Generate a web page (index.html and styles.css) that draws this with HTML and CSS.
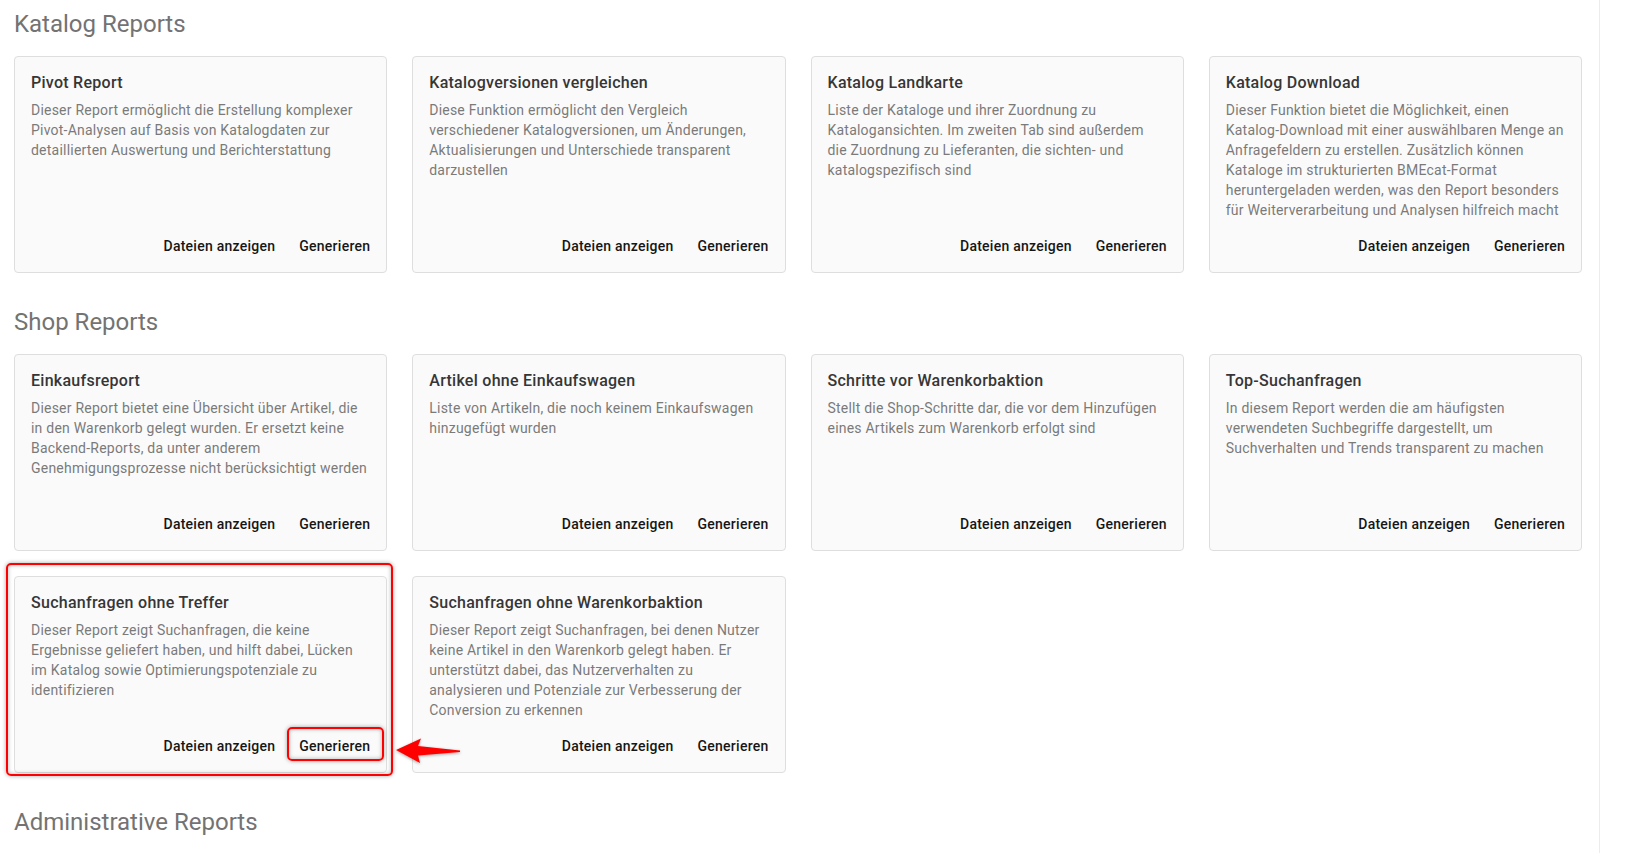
FILE: index.html
```html
<!DOCTYPE html>
<html lang="de">

<head>
    <meta charset="UTF-8">
    <meta name="viewport" content="width=device-width, initial-scale=1.0">
    <title>Reports</title>
    <link rel="stylesheet" href="styles.css">
</head>

<body>
    <div class="page">
        <section class="group">
            <h2>Katalog Reports</h2>
            <div class="cards">
                <div class="card">
                    <div class="content">
                        <h3>Pivot Report</h3>
                        <p>Dieser Report ermöglicht die Erstellung komplexer Pivot-Analysen auf Basis von Katalogdaten zur detaillierten Auswertung und Berichterstattung</p>
                    </div>
                    <div class="actions">
                        <button class="btn">Dateien anzeigen</button>
                        <button class="btn">Generieren</button>
                    </div>
                </div>
                <div class="card">
                    <div class="content">
                        <h3>Katalogversionen vergleichen</h3>
                        <p>Diese Funktion ermöglicht den Vergleich verschiedener Katalogversionen, um Änderungen, Aktualisierungen und Unterschiede transparent darzustellen</p>
                    </div>
                    <div class="actions">
                        <button class="btn">Dateien anzeigen</button>
                        <button class="btn">Generieren</button>
                    </div>
                </div>
                <div class="card">
                    <div class="content">
                        <h3>Katalog Landkarte</h3>
                        <p>Liste der Kataloge und ihrer Zuordnung zu Katalogansichten. Im zweiten Tab sind außerdem die Zuordnung zu Lieferanten, die sichten- und katalogspezifisch sind</p>
                    </div>
                    <div class="actions">
                        <button class="btn">Dateien anzeigen</button>
                        <button class="btn">Generieren</button>
                    </div>
                </div>
                <div class="card">
                    <div class="content">
                        <h3>Katalog Download</h3>
                        <p>Dieser Funktion bietet die Möglichkeit, einen Katalog-Download mit einer auswählbaren Menge an Anfragefeldern zu erstellen. Zusätzlich können Kataloge im strukturierten BMEcat-Format heruntergeladen werden, was den Report besonders für Weiterverarbeitung und Analysen hilfreich macht</p>
                    </div>
                    <div class="actions">
                        <button class="btn">Dateien anzeigen</button>
                        <button class="btn">Generieren</button>
                    </div>
                </div>
            </div>
        </section>

        <section class="group">
            <h2>Shop Reports</h2>
            <div class="cards">
                <div class="card">
                    <div class="content">
                        <h3>Einkaufsreport</h3>
                        <p>Dieser Report bietet eine Übersicht über Artikel, die in den Warenkorb gelegt wurden. Er ersetzt keine Backend-Reports, da unter anderem Genehmigungsprozesse nicht berücksichtigt werden</p>
                    </div>
                    <div class="actions">
                        <button class="btn">Dateien anzeigen</button>
                        <button class="btn">Generieren</button>
                    </div>
                </div>
                <div class="card">
                    <div class="content">
                        <h3>Artikel ohne Einkaufswagen</h3>
                        <p>Liste von Artikeln, die noch keinem Einkaufswagen hinzugefügt wurden</p>
                    </div>
                    <div class="actions">
                        <button class="btn">Dateien anzeigen</button>
                        <button class="btn">Generieren</button>
                    </div>
                </div>
                <div class="card">
                    <div class="content">
                        <h3>Schritte vor Warenkorbaktion</h3>
                        <p>Stellt die Shop-Schritte dar, die vor dem Hinzufügen eines Artikels zum Warenkorb erfolgt sind</p>
                    </div>
                    <div class="actions">
                        <button class="btn">Dateien anzeigen</button>
                        <button class="btn">Generieren</button>
                    </div>
                </div>
                <div class="card">
                    <div class="content">
                        <h3>Top-Suchanfragen</h3>
                        <p>In diesem Report werden die am häufigsten verwendeten Suchbegriffe dargestellt, um Suchverhalten und Trends transparent zu machen</p>
                    </div>
                    <div class="actions">
                        <button class="btn">Dateien anzeigen</button>
                        <button class="btn">Generieren</button>
                    </div>
                </div>
                <div class="card marked">
                    <div class="content">
                        <h3>Suchanfragen ohne Treffer</h3>
                        <p>Dieser Report zeigt Suchanfragen, die keine Ergebnisse geliefert haben, und hilft dabei, Lücken im Katalog sowie Optimierungspotenziale zu identifizieren</p>
                    </div>
                    <div class="actions">
                        <button class="btn">Dateien anzeigen</button>
                        <button class="btn">Generieren<span class="mark-btn"></span></button>
                    </div>
                    <span class="mark-card"></span>
                    <svg class="arrow" width="68" height="30" viewBox="0 0 68 30">
                        <polygon points="1,14 26,2.5 23,10 65,14.6 65,16 23,19.5 25,27" fill="#f00"/>
                    </svg>
                </div>
                <div class="card">
                    <div class="content">
                        <h3>Suchanfragen ohne Warenkorbaktion</h3>
                        <p>Dieser Report zeigt Suchanfragen, bei denen Nutzer keine Artikel in den Warenkorb gelegt haben. Er unterstützt dabei, das Nutzerverhalten zu analysieren und Potenziale zur Verbesserung der Conversion zu erkennen</p>
                    </div>
                    <div class="actions">
                        <button class="btn">Dateien anzeigen</button>
                        <button class="btn">Generieren</button>
                    </div>
                </div>
            </div>
        </section>

        <section class="group">
            <h2>Administrative Reports</h2>
        </section>
    </div>
</body>

</html>
```

FILE: styles.css
```css
body {
    margin: 0;
    background: #fff;
    font-family: Roboto, "Liberation Sans", sans-serif;
}

.page {
    width: 1600px;
    min-height: 853px;
    box-sizing: border-box;
    padding: 8px 17px 0 14px;
    border-right: 1px solid #ececec;
}

/*--------------------------*/
.group {
    margin-bottom: 33px;
}

.group h2 {
    margin: 0 0 16px;
    font-size: 24px;
    line-height: 32px;
    font-weight: 400;
    color: #737373;
}

.cards {
    display: grid;
    grid-template-columns: repeat(4, 1fr);
    gap: 25px;
}

.card {
    position: relative;
    display: flex;
    flex-direction: column;
    background: #fafafa;
    border: 1px solid #dedede;
    border-radius: 4px;
}

.card .content {
    padding: 16px 16px 0;
}

.card h3 {
    margin: 0 0 7px;
    font-size: 16px;
    line-height: 20px;
    font-weight: 500;
    letter-spacing: .27px;
    color: #363636;
}

.card p {
    margin: 0;
    min-height: 100px;
    font-size: 14px;
    line-height: 20px;
    letter-spacing: .22px;
    color: #7a7a7a;
}

.card .actions {
    margin-top: auto;
    display: flex;
    justify-content: flex-end;
    gap: 8px;
    padding: 8px;
}

.btn {
    position: relative;
    height: 36px;
    padding: 0 8px;
    border: 0;
    background: none;
    font-family: inherit;
    font-size: 14px;
    font-weight: 500;
    line-height: 36px;
    letter-spacing: .25px;
    color: #161616;
    cursor: pointer;
}

/* red callouts */
.marked {
    z-index: 2;
}

.mark-card,
.mark-btn {
    position: absolute;
    border: 2px solid #f00;
    border-radius: 5px;
    box-shadow: 0 0 4px rgba(0, 0, 0, .35), inset 0 0 4px rgba(0, 0, 0, .3);
    pointer-events: none;
}

.mark-card {
    top: -14px;
    left: -9px;
    right: -7px;
    bottom: -4px;
}

.mark-btn {
    top: -1px;
    left: -4px;
    right: -6px;
    bottom: 3px;
}

.arrow {
    position: absolute;
    left: 380px;
    top: 159px;
    filter: drop-shadow(0 1px 1.5px rgba(0, 0, 0, .35));
}
```
